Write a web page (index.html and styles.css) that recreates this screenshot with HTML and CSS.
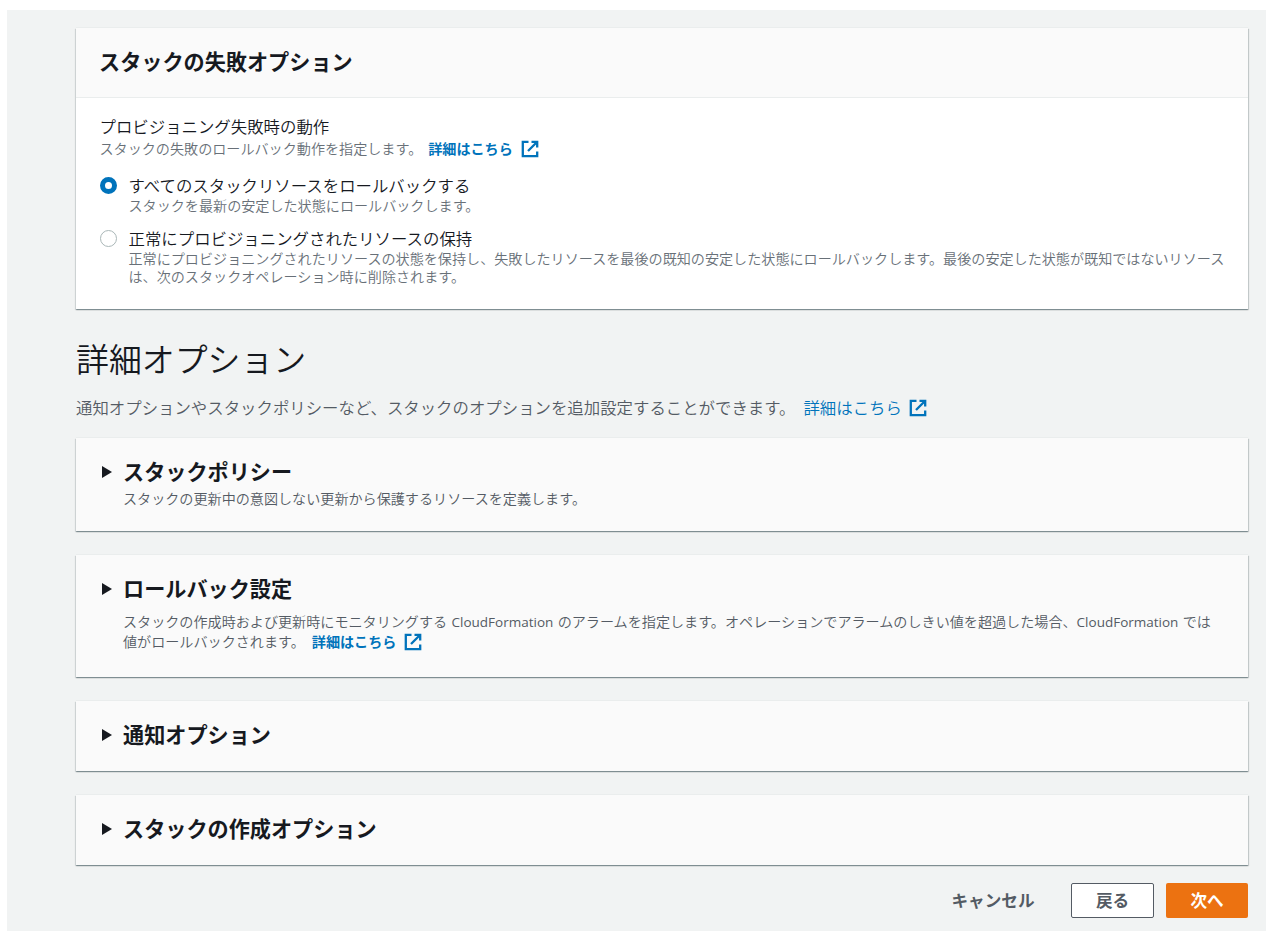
FILE: index.html
```html
<!DOCTYPE html>
<html lang="ja">
<head>
    <meta charset="UTF-8">
    <meta name="viewport" content="width=device-width, initial-scale=1.0">
    <title>スタックオプションの設定</title>
    <link rel="stylesheet" href="styles.css">
</head>
<body>
    <svg class="sprite" width="0" height="0">
        <symbol id="external" viewBox="0 0 18 18">
            <path d="M7.500 1.800H1.800v14.400h14.400v-4.700M10.500 1.800h5.700v5.700M15.500 2.500L7 11" fill="none" stroke="currentColor" stroke-width="2.3"/>
        </symbol>
        <symbol id="caret" viewBox="0 0 10 12">
            <path d="M0 0l10 6-10 6z" fill="currentColor"/>
        </symbol>
    </svg>

    <main class="page">
        <section class="card failure">
            <header class="card-header"><h2>スタックの失敗オプション</h2></header>
            <div class="card-body">
                <div class="label">プロビジョニング失敗時の動作</div>
                <div class="hint">スタックの失敗のロールバック動作を指定します。<a class="link bold" href="#">詳細はこちら<svg class="ext"><use href="#external"/></svg></a></div>

                <label class="option">
                    <input type="radio" name="failure" checked>
                    <span>
                        <span class="label">すべてのスタックリソースをロールバックする</span>
                        <span class="hint">スタックを最新の安定した状態にロールバックします。</span>
                    </span>
                </label>
                <label class="option">
                    <input type="radio" name="failure">
                    <span>
                        <span class="label">正常にプロビジョニングされたリソースの保持</span>
                        <span class="hint">正常にプロビジョニングされたリソースの状態を保持し、失敗したリソースを最後の既知の安定した状態にロールバックします。最後の安定した状態が既知ではないリソース<br>は、次のスタックオペレーション時に削除されます。</span>
                    </span>
                </label>
            </div>
        </section>

        <h1>詳細オプション</h1>
        <p class="intro">通知オプションやスタックポリシーなど、スタックのオプションを追加設定することができます。<a class="link" href="#">詳細はこちら<svg class="ext"><use href="#external"/></svg></a></p>

        <section class="card expander policy">
            <svg class="caret"><use href="#caret"/></svg>
            <div>
                <h2>スタックポリシー</h2>
                <p class="desc">スタックの更新中の意図しない更新から保護するリソースを定義します。</p>
            </div>
        </section>

        <section class="card expander rollback">
            <svg class="caret"><use href="#caret"/></svg>
            <div>
                <h2>ロールバック設定</h2>
                <p class="desc">スタックの作成時および更新時にモニタリングする <span class="latin">CloudFormation</span> のアラームを指定します。オペレーションでアラームのしきい値を超過した場合、<span class="latin">CloudFormation</span> では<br>値がロールバックされます。<a class="link bold" href="#">詳細はこちら<svg class="ext"><use href="#external"/></svg></a></p>
            </div>
        </section>

        <section class="card expander">
            <svg class="caret"><use href="#caret"/></svg>
            <h2>通知オプション</h2>
        </section>

        <section class="card expander">
            <svg class="caret"><use href="#caret"/></svg>
            <h2>スタックの作成オプション</h2>
        </section>

        <footer class="actions">
            <button class="btn btn-link">キャンセル</button>
            <button class="btn btn-normal">戻る</button>
            <button class="btn btn-primary">次へ</button>
        </footer>
    </main>
</body>
</html>
```
FILE: styles.css
```css
* { box-sizing: border-box; }
body { margin: 0; padding: 10px 12px 6px 7px; background: #fff; color: #16191f; font-family: "Noto Sans CJK JP", sans-serif; font-size: 16.42px; font-weight: 350; white-space: nowrap; }
h1, h2, p { margin: 0; }
.sprite { display: block; }

.page { height: 921px; padding: 18px 18px 0 69px; background: #f1f3f3; }

.card { height: 70px; margin-bottom: 24px; background: #fafafa; box-shadow: 0 1px 1px rgba(0,28,36,0.3), 1px 1px 1px rgba(0,28,36,0.15), -1px 1px 1px rgba(0,28,36,0.1), 0 -1px 0 #eaeded; }
.card h2 { font-size: 21.15px; line-height: 28px; font-weight: bold; }
.card-header { height: 70px; padding: 19px 23px 0; border-bottom: 1px solid #eaeded; }
.failure { height: 281px; margin-bottom: 26px; background: #fff; }
.failure .card-header { background: #fafafa; }
.card-body { padding: 17px 23px 0 23.5px; }

.label { display: block; font-size: 16.42px; line-height: 22px; }
.hint { display: block; color: #687078; font-size: 14.1px; line-height: 18px; }
.card-body > .hint { line-height: 23px; }
.option { display: flex; margin-top: 13px; }
.card-body > .hint + .option { margin-top: 14px; }

input[type="radio"] { appearance: none; width: 17px; height: 17px; margin: 3px 12px 0 0; flex: none; border: 1px solid #aab7b8; border-radius: 50%; background: #fff; }
input[type="radio"]:checked { border: 5.5px solid #0073bb; }

.link { margin-left: 6px; color: #0073bb; text-decoration: none; }
.bold { font-weight: bold; }
.ext { width: 18px; height: 18px; margin-left: 8px; vertical-align: -4px; }

h1 { font-size: 32.9px; line-height: 46px; font-weight: 350; }
.intro { margin: 14px 0 18px; height: 25px; line-height: 25px; color: #545b64; }
.intro .link { margin-left: 8px; }
.intro .ext { margin-left: 7px; vertical-align: -3px; }

.expander { display: flex; padding: 19px 24px 0 26px; }
.caret { width: 10px; height: 12px; margin: 9px 11px 0 0; flex: none; }
.desc { color: #545b64; font-size: 14.1px; line-height: 19px; word-spacing: 1.2px; }
.latin { font-family: "Open Sans", sans-serif; font-size: 13.5px; font-weight: 400; }
.policy { height: 93px; }
.policy .desc { margin-top: 4px; }
.rollback { height: 122px; }
.rollback .desc { margin-top: 10px; }
.rollback .link { margin-left: 7px; }

.actions { display: flex; justify-content: flex-end; margin-top: -6px; }
.btn { height: 35px; padding: 0 0 2px; border: 1px solid transparent; border-radius: 2px; background: transparent; color: #545b64; font-family: inherit; font-size: 16.6px; font-weight: bold; line-height: 30px; }
.btn-link { width: 132px; margin-right: 12px; }
.btn-normal { width: 83px; margin-right: 12px; border-color: #545b64; background: #fff; }
.btn-primary { width: 82px; background: #ec7211; color: #fff; }
```
